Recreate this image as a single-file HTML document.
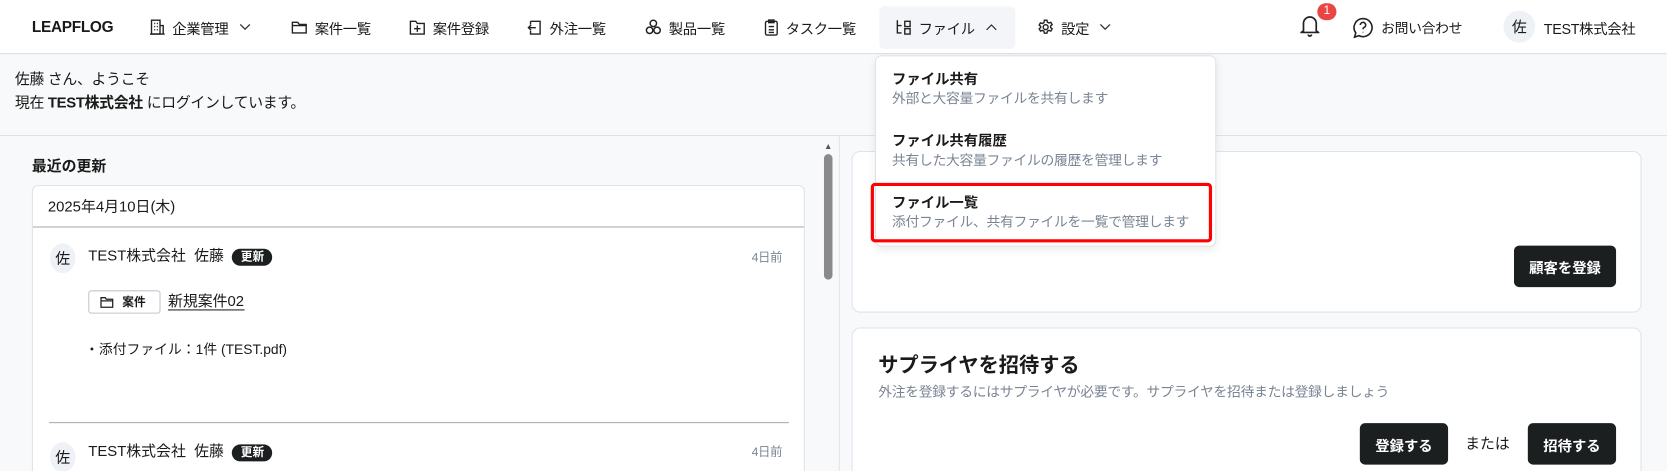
<!DOCTYPE html>
<html><head><meta charset="utf-8"><style>
*{box-sizing:border-box;margin:0;padding:0}
html,body{width:1667px;height:471px;overflow:hidden;background:#f8f9fa}
body{font-family:"Liberation Sans","Noto Sans CJK JP",sans-serif;color:#1a1a1a;font-size:14px;position:relative}
#w{position:absolute;left:0;top:0;width:1568px;height:443px;overflow:hidden;transform:scale(1.0632);transform-origin:0 0}
.abs{position:absolute}
.hdr{left:0;top:0;width:1568px;height:51px;background:#fff;border-bottom:1px solid #d9dee5}
.nav{top:0;height:51px;display:flex;align-items:center;font-size:13.5px;letter-spacing:-0.3px;white-space:nowrap}
.nav svg{margin-right:7px}
.nav svg.ch{margin:0 0 0 10px}
.btn{background:#1c1f20;color:#fff;border-radius:5px;font-size:13.5px;font-weight:bold;display:flex;align-items:center;justify-content:center}
.card{background:#fff;border:1px solid #dfe3e8;border-radius:8px}
.av{width:22px;height:22px;border-radius:50%;background:#eef2f6;font-size:14px;display:flex;align-items:center;justify-content:center}
.tag{background:#1c1f20;color:#fff;border-radius:10px;font-size:11px;font-weight:bold;padding:2px 8px}
.sub{color:#7a8594;font-size:13px;letter-spacing:-0.3px}
</style></head><body><div id="w">
<div class="abs hdr"></div>
<div class="abs nav" style="left:30px;font-weight:bold;font-size:14.5px">LEAPFLOG</div>
<div class="abs nav" style="left:141px"><svg width="14" height="15" viewBox="0 0 14 15" fill="none" stroke="#222" stroke-width="1.3"><rect x="1.5" y="1" width="8" height="13"/><path d="M9.5 6h3v8h-3M4 4h1M6.5 4h1M4 7h1M6.5 7h1M4 10h1M6.5 10h1M0 14h14"/></svg>企業管理<svg class="ch" width="11" height="7" viewBox="0 0 11 7" fill="none" stroke="#333" stroke-width="1.2"><path d="M1 1l4.5 4.5L10 1"/></svg></div>
<div class="abs nav" style="left:274px"><svg width="15" height="13" viewBox="0 0 15 13" fill="none" stroke="#222" stroke-width="1.3"><path d="M1 2h5l1.5 2H14v8H1z M1 5h13"/></svg>案件一覧</div>
<div class="abs nav" style="left:385px"><svg width="15" height="14" viewBox="0 0 15 14" fill="none" stroke="#222" stroke-width="1.3"><path d="M1 1h5l1.5 2H14v10H1z M7.5 5v6M4.5 8h6"/></svg>案件登録</div>
<div class="abs nav" style="left:495px"><svg width="15" height="14" viewBox="0 0 15 14" fill="none" stroke="#222" stroke-width="1.3"><path d="M4 1h9v12H4V10M4 4V1M9 7H2M4.5 4.5L2 7l2.5 2.5"/></svg>外注一覧</div>
<div class="abs nav" style="left:607px"><svg width="15" height="15" viewBox="0 0 15 15" fill="none" stroke="#222" stroke-width="1.4"><circle cx="7.5" cy="4" r="3"/><circle cx="4" cy="10.5" r="3"/><circle cx="11" cy="10.5" r="3"/></svg>製品一覧</div>
<div class="abs nav" style="left:719px"><svg width="13" height="16" viewBox="0 0 13 16" fill="none" stroke="#222" stroke-width="1.3"><rect x="1" y="2" width="11" height="13" rx="1.5"/><rect x="4" y="0.8" width="5" height="2.5"/><path d="M4 7h5M4 10h5M4 12.5h5"/></svg>タスク一覧</div>
<div class="abs" style="left:827px;top:6px;width:128px;height:40px;background:#f3f5f8;border-radius:5px"></div>
<div class="abs nav" style="left:842px"><svg width="15" height="15" viewBox="0 0 15 15" fill="none" stroke="#222" stroke-width="1.3"><path d="M2 1v12h4M2 6h4M9 2h5v5H9zM9 9h5v5H9z"/></svg>ファイル<svg class="ch" width="11" height="7" viewBox="0 0 11 7" fill="none" stroke="#333" stroke-width="1.2"><path d="M1 6l4.5-4.5L10 6"/></svg></div>
<div class="abs nav" style="left:976px"><svg width="15" height="15" viewBox="0 0 15 15" fill="none" stroke="#222" stroke-width="1.3"><circle cx="7.5" cy="7.5" r="2.3"/><path d="M6.3 1h2.4l.4 1.8 1.5.8 1.8-.6 1.2 2.1-1.4 1.2v1.6l1.4 1.2-1.2 2.1-1.8-.6-1.5.8-.4 1.8H6.3l-.4-1.8-1.5-.8-1.8.6-1.2-2.1 1.4-1.2V6.8L1.4 5.6l1.2-2.1 1.8.6 1.5-.8z"/></svg>設定<svg class="ch" width="11" height="7" viewBox="0 0 11 7" fill="none" stroke="#333" stroke-width="1.2"><path d="M1 1l4.5 4.5L10 1"/></svg></div>
<div class="abs" style="left:1223px;top:13px"><svg width="18" height="22" viewBox="0 0 18 22" fill="none" stroke="#222" stroke-width="1.6"><path d="M3 16V9a6 6 0 0 1 12 0v7l2 1.5H1z M7.5 19.5a1.5 1.5 0 0 0 3 0"/></svg></div>
<div class="abs" style="left:1239px;top:3px;width:18px;height:16px;border-radius:8px;background:#e94545;color:#fff;font-size:11px;text-align:center;line-height:15px">1</div>
<div class="abs nav" style="left:1272px;font-size:13px"><svg width="20" height="20" viewBox="0 0 20 20" fill="none" stroke="#222" stroke-width="1.5"><path d="M10 1.5a8.5 8.5 0 1 1-4 16L2 19l1.2-4A8.5 8.5 0 0 1 10 1.5z"/><path d="M7.5 7.5a2.5 2.5 0 1 1 3.5 2.3c-.8.4-1 .9-1 1.7M10 14v.5"/></svg>お問い合わせ</div>
<div class="abs av" style="left:1414px;top:10px;width:30px;height:30px">佐</div>
<div class="abs nav" style="left:1452px;font-size:13.5px">TEST株式会社</div>

<div class="abs" style="left:0;top:127px;width:1568px;height:1px;background:#dde1e6"></div>
<div class="abs" style="left:14px;top:63px;font-size:14px;line-height:22px;letter-spacing:-0.3px">佐藤 さん、ようこそ<br>現在 <b>TEST株式会社</b> にログインしています。</div>

<div class="abs" style="left:30px;top:146px;font-weight:bold;font-size:14px">最近の更新</div>
<div class="abs card" style="left:30px;top:174px;width:727px;height:320px;border-radius:6px">
 <div style="height:39px;border-bottom:1px solid #a5acb5;padding:9px 14px;font-size:14px">2025年4月10日(木)</div>
</div>
<div class="abs av" style="left:47px;top:229px;width:24px;height:28px">佐</div>
<div class="abs" style="left:83px;top:230px;font-size:14px">TEST株式会社&nbsp; 佐藤 <span class="tag" style="margin-left:4px">更新</span></div>
<div class="abs sub" style="left:707px;top:234px;font-size:11.5px">4日前</div>
<div class="abs" style="left:83px;top:273px;width:68px;height:22px;border:1px solid #bfc6cf;border-radius:3px;font-size:11px;font-weight:bold;display:flex;align-items:center;padding-left:10px"><svg width="13" height="11" viewBox="0 0 13 11" fill="none" stroke="#222" stroke-width="1.2" style="margin-right:8px"><path d="M1 1h4l1 1.5h6V10H1zM1 4h11"/></svg>案件</div>
<div class="abs" style="left:158px;top:275px;font-size:14px;border-bottom:1.5px solid #222;line-height:16px">新規案件02</div>
<div class="abs" style="left:80px;top:318px;font-size:13px">・添付ファイル：1件 (TEST.pdf)</div>
<div class="abs" style="left:46px;top:397px;width:696px;height:1px;background:#a5acb5"></div>
<div class="abs av" style="left:47px;top:416px;width:24px;height:28px">佐</div>
<div class="abs" style="left:83px;top:414px;font-size:14px">TEST株式会社&nbsp; 佐藤 <span class="tag" style="margin-left:4px">更新</span></div>
<div class="abs sub" style="left:707px;top:417px;font-size:11.5px">4日前</div>

<div class="abs" style="left:789px;top:128px;width:1px;height:343px;background:#e3e6ea"></div>
<div class="abs" style="left:775px;top:133px;font-size:8px;color:#555">▲</div>
<div class="abs" style="left:775px;top:145px;width:8px;height:118px;border-radius:4px;background:#8a8a8a"></div>

<div class="abs card" style="left:801px;top:142px;width:743px;height:152px"></div>
<div class="abs btn" style="left:1424px;top:231px;width:96px;height:39px">顧客を登録</div>
<div class="abs card" style="left:801px;top:308px;width:743px;height:180px"></div>
<div class="abs" style="left:826px;top:329px;font-size:19px;font-weight:bold">サプライヤを招待する</div>
<div class="abs sub" style="left:826px;top:358px">外注を登録するにはサプライヤが必要です。サプライヤを招待または登録しましょう</div>
<div class="abs btn" style="left:1279px;top:398px;width:83px;height:39px">登録する</div>
<div class="abs" style="left:1378px;top:407px;font-size:14px">または</div>
<div class="abs btn" style="left:1437px;top:398px;width:83px;height:39px">招待する</div>

<div class="abs" style="left:823px;top:52px;width:321px;height:180px;background:#fff;border:1px solid #dfe3e8;border-radius:6px;box-shadow:0 3px 8px rgba(0,0,0,.08)"></div>
<div class="abs" style="left:839px;top:66px;font-size:13.5px;font-weight:bold;line-height:18px">ファイル共有<br><span class="sub" style="font-weight:normal">外部と大容量ファイルを共有します</span></div>
<div class="abs" style="left:839px;top:124px;font-size:13.5px;font-weight:bold;line-height:18px">ファイル共有履歴<br><span class="sub" style="font-weight:normal">共有した大容量ファイルの履歴を管理します</span></div>
<div class="abs" style="left:839px;top:182px;font-size:13.5px;font-weight:bold;line-height:18px">ファイル一覧<br><span class="sub" style="font-weight:normal">添付ファイル、共有ファイルを一覧で管理します</span></div>
<div class="abs" style="left:819px;top:172px;width:321px;height:56px;border:3px solid #f00;border-radius:4px"></div>
</div></body></html>
